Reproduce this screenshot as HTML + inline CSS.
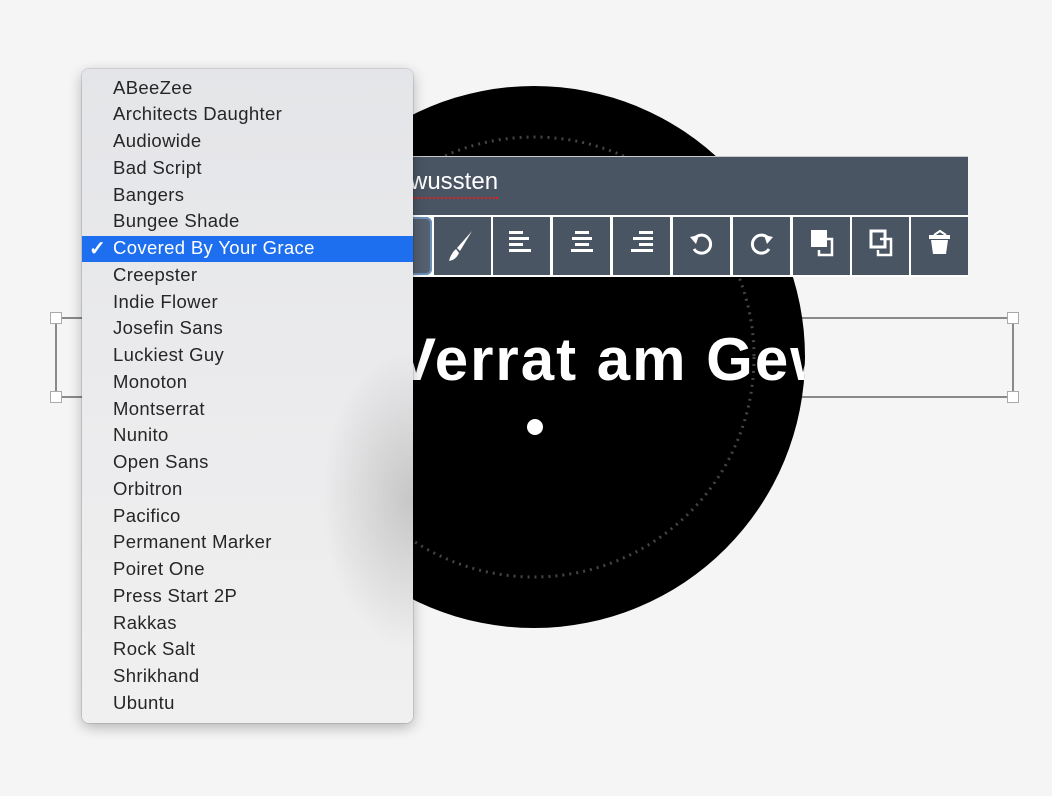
<!DOCTYPE html>
<html><head><meta charset="utf-8"><style>
html,body{margin:0;padding:0;width:1052px;height:796px;overflow:hidden;background:#f5f5f5;font-family:"Liberation Sans",sans-serif}
.abs{position:absolute}
.menu{position:absolute;left:82px;top:69px;width:331px;height:654px;border-radius:7px;
background:radial-gradient(ellipse 90px 150px at 330px 430px,rgba(160,160,160,.5),rgba(200,200,200,0) 100%),linear-gradient(#e4e5e8,#ebebed 50%,#f0f0f0);
box-shadow:0 4px 14px rgba(0,0,0,.28),0 0 0 1px rgba(0,0,0,.1);overflow:hidden}
.it{position:absolute;left:31px;height:26.74px;line-height:26.74px;font-size:18.5px;letter-spacing:0.35px;color:#262626;white-space:nowrap}
.sel{position:absolute;left:0;width:331px;height:26px;background:#1d6ff0}
.tb{position:absolute;top:217px;height:58px;background:#4a5563;width:57px}
.tb svg{position:absolute;left:0;top:0}
.h{position:absolute;width:12px;height:12px;background:#fff;border:1px solid #aaa;box-sizing:border-box}
</style></head><body>
<svg class="abs" style="left:0;top:0" width="1052" height="796">
<defs><clipPath id="c"><circle cx="534" cy="357" r="271"/></clipPath></defs>
<rect x="56" y="318" width="957" height="79" fill="none" stroke="#666" stroke-width="1.5"/>
<circle cx="534" cy="357" r="271" fill="#000"/>
<circle cx="534" cy="357" r="220" fill="none" stroke="#444" stroke-width="3" stroke-dasharray="2 5"/>
<circle cx="535" cy="427" r="8" fill="#fff"/>
<g clip-path="url(#c)"><text x="396" y="380" font-family="Liberation Sans Narrow, Liberation Sans, sans-serif" font-weight="bold" font-size="60" fill="#fff" letter-spacing="2">Verrat am Gewussten</text></g>
</svg>
<div class="h" style="left:50px;top:312px"></div><div class="h" style="left:50px;top:391px"></div>
<div class="h" style="left:1007px;top:312px"></div><div class="h" style="left:1007px;top:391px"></div>
<div class="abs" style="left:400px;top:156px;width:568px;height:58px;background:#4a5563;border-top:1px solid #ccc"></div>
<div class="abs" style="left:410px;top:168px;font-size:24px;color:#fff">wussten</div>
<div class="abs" style="left:410px;top:197px;width:88px;border-top:2px dotted #e02020"></div>
<div class="abs" style="left:400px;top:215px;width:568px;height:62px;background:#fff"></div>
<div class="tb" style="left:400px;width:32px;background:#556070;border-radius:0 6px 6px 0;box-shadow:inset 0 0 0 2px #6b8fb8"></div>
<div class="tb" style="left:434px"><svg width="57" height="58"><path d="M38 14 L23 31 L26 34 Z" fill="#fff"/><path d="M22 32 Q17 36 15 44 Q22 43 25 36 Z" fill="#fff"/></svg></div>
<div class="tb" style="left:493px"><svg width="57" height="58"><g fill="#fff"><rect x="16" y="14" width="14" height="3"/><rect x="16" y="20" width="20" height="3"/><rect x="16" y="26" width="14" height="3"/><rect x="16" y="32" width="22" height="3"/></g></svg></div>
<div class="tb" style="left:553px"><svg width="57" height="58"><g fill="#fff"><rect x="22" y="14" width="14" height="3"/><rect x="19" y="20" width="20" height="3"/><rect x="22" y="26" width="14" height="3"/><rect x="18" y="32" width="22" height="3"/></g></svg></div>
<div class="tb" style="left:613px"><svg width="57" height="58"><g fill="#fff"><rect x="26" y="14" width="14" height="3"/><rect x="20" y="20" width="20" height="3"/><rect x="26" y="26" width="14" height="3"/><rect x="18" y="32" width="22" height="3"/></g></svg></div>
<div class="tb" style="left:673px"><svg width="57" height="58"><path d="M22 21 A9 9 0 1 1 21 32" fill="none" stroke="#fff" stroke-width="3"/><path d="M17 20 L26 18 L23 27 Z" fill="#fff"/></svg></div>
<div class="tb" style="left:733px"><svg width="57" height="58"><path d="M35 21 A9 9 0 1 0 36 32" fill="none" stroke="#fff" stroke-width="3"/><path d="M40 20 L31 18 L34 27 Z" fill="#fff"/></svg></div>
<div class="tb" style="left:793px"><svg width="57" height="58"><path d="M27 22 H39 V38 H26 V33" fill="none" stroke="#fff" stroke-width="2.5"/><rect x="18" y="13" width="16" height="17" fill="#fff"/></svg></div>
<div class="tb" style="left:852px"><svg width="57" height="58"><path d="M28 22 H39 V38 H26 V33" fill="none" stroke="#fff" stroke-width="2.5"/><rect x="19" y="14" width="14" height="16" fill="none" stroke="#fff" stroke-width="3"/></svg></div>
<div class="tb" style="left:911px"><svg width="57" height="58"><path d="M23 18 L29 14 L35 18" fill="none" stroke="#fff" stroke-width="2"/><rect x="18" y="18" width="21" height="4" fill="#fff"/><path d="M20 23 H37 L35 37 H22 Z" fill="#fff"/></svg></div>
<div class="menu">
<div class="sel" style="top:167px"></div>
<div class="it" style="left:7px;top:166.5px;color:#fff;font-size:20px;font-weight:bold">✓</div>
<div class="it" style="top:5.6px">ABeeZee</div>
<div class="it" style="top:32.3px">Architects Daughter</div>
<div class="it" style="top:59.1px">Audiowide</div>
<div class="it" style="top:85.8px">Bad Script</div>
<div class="it" style="top:112.6px">Bangers</div>
<div class="it" style="top:139.3px">Bungee Shade</div>
<div class="it" style="top:166.1px;color:#fff">Covered By Your Grace</div>
<div class="it" style="top:192.8px">Creepster</div>
<div class="it" style="top:219.5px">Indie Flower</div>
<div class="it" style="top:246.3px">Josefin Sans</div>
<div class="it" style="top:273px">Luckiest Guy</div>
<div class="it" style="top:299.8px">Monoton</div>
<div class="it" style="top:326.5px">Montserrat</div>
<div class="it" style="top:353.3px">Nunito</div>
<div class="it" style="top:380px">Open Sans</div>
<div class="it" style="top:406.7px">Orbitron</div>
<div class="it" style="top:433.5px">Pacifico</div>
<div class="it" style="top:460.2px">Permanent Marker</div>
<div class="it" style="top:487px">Poiret One</div>
<div class="it" style="top:513.7px">Press Start 2P</div>
<div class="it" style="top:540.5px">Rakkas</div>
<div class="it" style="top:567.2px">Rock Salt</div>
<div class="it" style="top:593.9px">Shrikhand</div>
<div class="it" style="top:620.7px">Ubuntu</div>
</div>
</body></html>
